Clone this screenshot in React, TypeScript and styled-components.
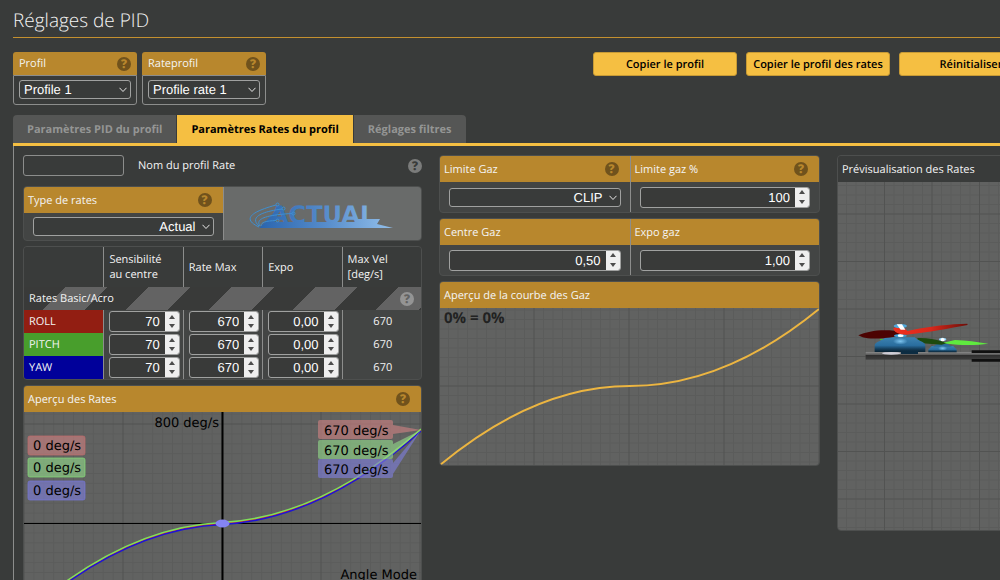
import React, { useId } from "react";
import styled, { createGlobalStyle, css } from "styled-components";

const gold = "#b8872d";
const yellow = "#f5bf42";
const line = "#8c8d8c";
const sans = '"Open Sans", "Noto Sans", sans-serif';
const control = '"Liberation Sans", Arial, sans-serif';

const GlobalStyle = createGlobalStyle`
  *, *::before, *::after { box-sizing: border-box; }
  body {
    margin: 0;
    background: #393b3a;
    color: #f4f4f4;
    font: 11px/15px ${sans};
    text-rendering: geometricPrecision;
  }
  button, input, select { margin: 0; padding: 0; color: inherit; font: inherit; text-rendering: inherit; }
`;

const Viewport = styled.div`
  height: 100vh;
  overflow: hidden;
`;

const Page = styled.main`
  min-width: 1056px;
  padding: 0 13px;
`;

const Title = styled.h1`
  margin: 0;
  padding: 6px 0 3px;
  border-bottom: 1px solid #c4902f;
  font-size: 19px;
  font-weight: 300;
  line-height: 28px;
`;

const TopBar = styled.div`
  display: flex;
  align-items: flex-start;
  justify-content: space-between;
  margin-top: 14px;
`;

const Cluster = styled.div<{ $gap: number }>`
  display: flex;
  gap: ${(p) => p.$gap}px;
`;

const ProfileBox = styled.div`
  width: 124px;
`;

const ProfileHeader = styled.div`
  display: flex;
  align-items: center;
  justify-content: space-between;
  height: 23px;
  padding: 0 6px;
  border-radius: 3px 3px 0 0;
  background: ${gold};
`;

const ProfileBody = styled.div`
  height: 30px;
  padding: 4px 5px;
  border: 1px solid ${line};
  border-radius: 0 0 3px 3px;
`;

const ActionButton = styled.button`
  width: 144px;
  height: 24px;
  border: 1px solid #c79a35;
  border-radius: 3px;
  background: ${yellow};
  color: #000;
  font-weight: 600;
  white-space: nowrap;
`;

const Tabs = styled.div`
  display: flex;
  gap: 1px;
  margin-top: 10px;
  border-bottom: 3px solid ${yellow};
`;

const Tab = styled.button<{ $active?: boolean }>`
  height: 28px;
  padding: 0 14px;
  border: 0;
  background: ${(p) => (p.$active ? yellow : "#555655")};
  color: ${(p) => (p.$active ? "#000" : "#949594")};
  font-weight: 700;
  &:first-child { border-top-left-radius: 4px; }
  &:last-child { border-top-right-radius: 4px; }
`;

const Panel = styled.section`
  display: grid;
  grid-template-columns: minmax(0, 399fr) minmax(0, 381fr) minmax(0, 206fr);
  align-items: start;
  gap: 17px;
  padding: 9px 0 20px 9px;
  border-left: 1px solid ${line};
`;

const Column = styled.div`
  display: flex;
  flex-direction: column;
  gap: 5px;
`;

const NameRow = styled.div`
  display: flex;
  align-items: center;
  height: 21px;
  margin-bottom: 5px;
`;

const NameInput = styled.input`
  width: 101px;
  height: 21px;
  padding: 0 4px;
  border: 1px solid ${line};
  border-radius: 3px;
  background: transparent;
  font-family: ${control};
`;

const NameLabel = styled.label`
  flex: 1;
  margin-left: 14px;
`;

const Card = styled.div`
  overflow: hidden;
  border: 1px solid #4d4f4e;
  border-radius: 4px;
  background: #434544;
`;

const Split = styled.div`
  display: grid;
  grid-template-columns: repeat(2, minmax(0, 1fr));
  > * + * { border-left: 1px solid ${line}; }
`;

const CardHeader = styled.div<{ $plain?: boolean }>`
  display: flex;
  align-items: center;
  justify-content: space-between;
  height: 26px;
  padding: 0 11px 0 4px;
  background: ${(p) => (p.$plain ? "#393b3a" : gold)};
  white-space: nowrap;
`;

const CardBody = styled.div<{ $tall?: boolean }>`
  display: flex;
  align-items: center;
  height: ${(p) => (p.$tall ? 30 : 27)}px;
  padding: 0 9px;
`;

const LogoPane = styled.div`
  display: flex;
  align-items: center;
  justify-content: center;
  background: #696b6a;
`;

const helpTones = {
  gold: css`background: #70521c; color: ${gold};`,
  dark: css`background: #7b7c7b; color: #393b3a;`,
  band: css`background: #949494; color: #626262;`,
};

const HelpBadge = styled.span<{ $tone: keyof typeof helpTones }>`
  display: inline-flex;
  align-items: center;
  justify-content: center;
  flex: none;
  width: 14px;
  height: 14px;
  border-radius: 50%;
  font-size: 12px;
  font-weight: 800;
  line-height: 14px;
  ${(p) => helpTones[p.$tone]}
`;

const SelectWrap = styled.div`
  position: relative;
  width: 100%;
  height: 19px;
`;

const SelectBox = styled.select<{ $right?: boolean }>`
  display: block;
  width: 100%;
  height: 19px;
  padding: 0 17px 0 4px;
  appearance: none;
  border: 1px solid #a0a1a0;
  border-radius: 3px;
  background: #393b3a;
  color: #fff;
  font: 13px/17px ${control};
  text-align-last: ${(p) => (p.$right ? "right" : "left")};
`;

const Chevron = styled.svg`
  position: absolute;
  top: 7px;
  right: 4px;
  pointer-events: none;
`;

const NumberWrap = styled.div`
  display: flex;
  width: 100%;
  height: 21px;
  overflow: hidden;
  border: 1px solid #a0a1a0;
  border-radius: 3px;
  background: #393a39;
`;

const NumberInput = styled.input`
  flex: 1;
  min-width: 0;
  padding-right: 5px;
  border: 0;
  background: transparent;
  color: #fff;
  font: 13px/19px ${control};
  text-align: right;
`;

const Stepper = styled.span`
  display: flex;
  flex-direction: column;
  width: 14px;
  background: #efefef;
`;

const StepButton = styled.button`
  display: flex;
  flex: 1;
  align-items: center;
  justify-content: center;
  border: 0;
  background: transparent;
  color: #4c4c4c;
`;

const RateTable = styled.table`
  width: 100%;
  table-layout: fixed;
  border-collapse: separate;
  border-spacing: 0;
  th, td { padding: 0 3px 0 5px; text-align: left; font-weight: 400; }
  thead th { height: 40px; background: #393b3a; }
  thead th + th, tbody td { border-left: 1px solid ${line}; }
`;

const Band = styled.th`
  && {
    height: 23px;
    padding-right: 7px;
    background: repeating-linear-gradient(135deg, #393a39 0 29px, #636363 29px 59px);
  }
`;

const BandContent = styled.div`
  display: flex;
  align-items: center;
  justify-content: space-between;
`;

const AxisName = styled.th<{ $color: string }>`
  height: 23px;
  background: ${(p) => p.$color};
`;

const MaxVelocity = styled.td`
  && { text-align: center; }
`;

const Chart = styled.svg`
  display: block;
  width: 100%;
  background: #616261;
`;

const Preview = styled(Chart)`
  height: 348px;
`;

function Help({ tone = "gold" }: { tone?: keyof typeof helpTones }) {
  return <HelpBadge $tone={tone} title="Aide">?</HelpBadge>;
}

function Select({ label, value, right }: { label: string; value: string; right?: boolean }) {
  return (
    <SelectWrap>
      <SelectBox aria-label={label} $right={right} defaultValue={value}>
        <option>{value}</option>
      </SelectBox>
      <Chevron width="8" height="6" viewBox="0 0 8 6" fill="none" stroke="#e8e8e8">
        <path d="M0.5 0.8 4 4.5 7.5 0.8" />
      </Chevron>
    </SelectWrap>
  );
}

function NumberField({ label, value }: { label: string; value: string }) {
  return (
    <NumberWrap>
      <NumberInput aria-label={label} inputMode="decimal" defaultValue={value} />
      <Stepper>
        <StepButton aria-label={`${label} +`}>
          <svg width="6" height="4" viewBox="0 0 6 4"><path d="M0 4 3 0 6 4Z" fill="currentColor" /></svg>
        </StepButton>
        <StepButton aria-label={`${label} -`}>
          <svg width="6" height="4" viewBox="0 0 6 4"><path d="M0 0 3 4 6 0Z" fill="currentColor" /></svg>
        </StepButton>
      </Stepper>
    </NumberWrap>
  );
}

/* Fine cells inside major cells, with the major lines crossing at (x, y). */
function GridLines({ x, y, major }: { x: number; y: number; major: number }) {
  const id = useId();
  const minor = major / 10 >= 9 ? major / 10 : major / 5;
  return (
    <>
      <defs>
        <pattern id={`${id}a`} x={x - 0.5} y={y - 0.5} width={minor} height={minor} patternUnits="userSpaceOnUse">
          <path d={`M0.5 0V${minor}M0 0.5H${minor}`} stroke="#000" strokeOpacity="0.06" />
        </pattern>
        <pattern id={`${id}b`} x={x - 0.5} y={y - 0.5} width={major} height={major} patternUnits="userSpaceOnUse">
          <path d={`M0.5 0V${major}M0 0.5H${major}`} stroke="#000" strokeOpacity="0.1" />
        </pattern>
      </defs>
      <rect width="100%" height="100%" fill={`url(#${id}a)`} />
      <rect width="100%" height="100%" fill={`url(#${id}b)`} />
    </>
  );
}

function ActualLogo() {
  return (
    <svg width="146" height="32" viewBox="0 0 146 32" role="img" aria-label="Actual">
      <defs>
        <linearGradient id="logoFill" gradientUnits="userSpaceOnUse" x1="10" y1="0" x2="140" y2="0">
          <stop offset="0" stopColor="#2a65ae" />
          <stop offset="0.5" stopColor="#558bca" />
          <stop offset="1" stopColor="#8fbce8" />
        </linearGradient>
      </defs>
      <text x="21" y="25" fontFamily='"DejaVu Sans", sans-serif' fontWeight="700" fontSize="24" fill="url(#logoFill)">
        ACTUAL
      </text>
      <path d="M10 30 17 23 30 9 34 9 23 24H106V21H131L128 26 144 30Z" fill="url(#logoFill)" />
      <g fill="none" stroke="#3f8fd0" strokeWidth="1">
        <path d="M10 29C-5 22-2 15 27 7" />
        <path d="M10 28C1 20 10 14 33 11" />
        <path d="M11 28C6 21 16 17 43 15.500" />
        <path d="M12 28C12 24 17 23 27 22.500" />
        <circle cx="28.500" cy="6.500" r="1.500" />
        <circle cx="34.500" cy="10.500" r="1.500" />
        <circle cx="44.500" cy="15.500" r="1.500" />
        <circle cx="28.500" cy="22.500" r="1.500" />
      </g>
    </svg>
  );
}

const balloons = [
  { fill: "#c87f7f", stroke: "#c06a6a", left: 24, right: 8, tail: "M369 13 397 18 369 22Z" },
  { fill: "#8fd287", stroke: "#83dd76", left: 46, right: 28, tail: "M369 32 397 18 369 42Z" },
  { fill: "#7c7cd6", stroke: "#7575d8", left: 69, right: 47, tail: "M369 51 397 18 369 62Z" },
];

const curves = [
  { color: "#e02020", dy: 0 },
  { color: "#1c14d8", dy: 1 },
  { color: "#7fe05a", dy: -1 },
];

function RatesChart() {
  return (
    <Chart viewBox="0 0 397 223" fontFamily='"DejaVu Sans", Verdana, sans-serif' fontSize="13" role="img" aria-label="Aperçu des Rates">
      <GridLines x={198} y={111} major={99} />
      <path d="M0 111.500H397" stroke="#000" />
      <path d="M198.500 0V223" stroke="#000" strokeWidth="2" />
      {curves.map((c) => (
        <path
          key={c.color}
          d="M0 204Q99 116 198 111.500Q298 106 397 18"
          transform={`translate(0 ${c.dy})`}
          fill="none"
          stroke={c.color}
          strokeWidth="1.500"
        />
      ))}
      <ellipse cx="198.500" cy="111.500" rx="7" ry="4" fill="#8484f5" />
      {balloons.map((b) => (
        <g key={b.fill}>
          <g fill={b.fill} fillOpacity="0.65">
            <rect x="4" y={b.left} width="57" height="19" rx="2" stroke={b.stroke} strokeOpacity="0.7" />
            <rect x="294" y={b.right} width="75" height="19" rx="2" />
            <path d={b.tail} />
          </g>
          <text x="9" y={b.left + 14}>0 deg/s</text>
          <text x="300" y={b.right + 15}>670 deg/s</text>
        </g>
      ))}
      <text x="195" y="15" textAnchor="end">800 deg/s</text>
      <text x="393" y="167" textAnchor="end">Angle Mode</text>
    </Chart>
  );
}

function ThrottleChart() {
  return (
    <Chart viewBox="0 0 379 157" role="img" aria-label="Aperçu de la courbe des Gaz">
      <GridLines x={189} y={78} major={95} />
      <path d="M0 157Q95 78 190 78Q285 78 379 1" fill="none" stroke="#ecb541" strokeWidth="2" />
      <text x="4" y="15" fontFamily={sans} fontSize="15" fontWeight="700" fill="#222">0% = 0%</text>
    </Chart>
  );
}

function QuadPreview() {
  return (
    <Preview role="img" aria-label="Prévisualisation des Rates">
      <defs>
        <linearGradient id="motor" x1="0" y1="0" x2="0" y2="1">
          <stop offset="0" stopColor="#3d82b0" />
          <stop offset="0.55" stopColor="#2a6e9f" />
          <stop offset="0.8" stopColor="#143c58" />
          <stop offset="1" stopColor="#0b2333" />
        </linearGradient>
        <radialGradient id="glint">
          <stop offset="0" stopColor="#7cc3ee" />
          <stop offset="1" stopColor="#7cc3ee" stopOpacity="0" />
        </radialGradient>
        <linearGradient id="arm" x1="0" y1="0" x2="0" y2="1">
          <stop offset="0" stopColor="#8a8a8a" />
          <stop offset="0.35" stopColor="#5b5b5b" />
          <stop offset="0.45" stopColor="#2f2f2f" />
          <stop offset="1" stopColor="#3f3f3f" />
        </linearGradient>
        <linearGradient id="redBlade" x1="0" y1="0" x2="1" y2="0">
          <stop offset="0" stopColor="#f0301f" />
          <stop offset="0.5" stopColor="#d9281b" />
          <stop offset="1" stopColor="#6d0f0a" />
        </linearGradient>
      </defs>
      <GridLines x={94} y={32} major={47.5} />
      <g transform="scale(0.3333) translate(-24 -123)">
        <rect x="107" y="633" width="600" height="23" fill="url(#arm)" />
        <path d="M425 628H707V636H425ZM425 654H707V662H425Z" fill="#101010" />
        <ellipse cx="184" cy="637" rx="28" ry="4" fill="#cfcdd6" />
        <path d="M305 615H370L380 626V634H295V626Z" fill="url(#motor)" />
        <path d="M322 608H352L366 617H309Z" fill="#2b6c9c" />
        <ellipse cx="338" cy="622" rx="14" ry="7" fill="url(#glint)" />
        <path d="M262 591C290 590 315 594 335 601L352 606 335 611C310 610 280 608 264 604Z" fill="#1d4a0f" />
        <path d="M340 605 375 597C410 598 440 603 475 608 440 613 390 613 352 608Z" fill="#5fea3f" />
        <ellipse cx="338" cy="595" rx="11" ry="5" fill="#8fd0f5" />
        <ellipse cx="338" cy="596" rx="6" ry="5" fill="#fff" />
        <path d="M148 594H160V598H152Z" fill="#42c529" />
        <path d="M166 589H255C258 598 285 602 286 612V633H134V612C136 602 162 598 166 589Z" fill="url(#motor)" />
        <path d="M213 630H264V639H213Z" fill="#0c2c42" />
        <ellipse cx="211" cy="601" rx="22" ry="10" fill="url(#glint)" />
        <path d="M85 583C110 572 145 565 192 569L214 580 194 587C165 592 120 596 98 589Z" fill="#4c0302" />
        <ellipse cx="211" cy="584" rx="19" ry="5" fill="#3aa0da" />
        <ellipse cx="212" cy="584" rx="9" ry="4" fill="#fff" />
        <path d="M190 562C200 556 224 556 232 570L250 566C300 556 360 549 412 548L413 552C360 562 290 574 240 580 220 584 192 578 190 562Z" fill="url(#redBlade)" />
        <ellipse cx="211" cy="555" rx="20" ry="6" fill="#4fa9dc" />
        <path d="M200 550H216L226 566 212 566Z" fill="#fff" />
      </g>
    </Preview>
  );
}

const axes = [
  { name: "ROLL", color: "#921e12" },
  { name: "PITCH", color: "#489e2c" },
  { name: "YAW", color: "#00009a" },
];

function RatesTable() {
  return (
    <Card>
      <RateTable>
        <thead>
          <tr>
            <th aria-label="Axe" />
            <th>Sensibilité<br />au centre</th>
            <th>Rate Max</th>
            <th>Expo</th>
            <th>Max Vel<br />[deg/s]</th>
          </tr>
        </thead>
        <tbody>
          <tr>
            <Band colSpan={5}>
              <BandContent>Rates Basic/Acro<Help tone="band" /></BandContent>
            </Band>
          </tr>
          {axes.map((axis) => (
            <tr key={axis.name}>
              <AxisName scope="row" $color={axis.color}>{axis.name}</AxisName>
              <td><NumberField label={`${axis.name} sensibilité`} value="70" /></td>
              <td><NumberField label={`${axis.name} rate max`} value="670" /></td>
              <td><NumberField label={`${axis.name} expo`} value="0,00" /></td>
              <MaxVelocity>670</MaxVelocity>
            </tr>
          ))}
        </tbody>
      </RateTable>
    </Card>
  );
}

export default function App() {
  return (
    <Viewport>
      <GlobalStyle />
      <Page>
        <Title>Réglages de PID</Title>
        <TopBar>
          <Cluster $gap={5}>
            <ProfileBox>
              <ProfileHeader>Profil<Help /></ProfileHeader>
              <ProfileBody><Select label="Profil" value="Profile 1" /></ProfileBody>
            </ProfileBox>
            <ProfileBox>
              <ProfileHeader>Rateprofil<Help /></ProfileHeader>
              <ProfileBody><Select label="Rateprofil" value="Profile rate 1" /></ProfileBody>
            </ProfileBox>
          </Cluster>
          <Cluster $gap={9}>
            <ActionButton>Copier le profil</ActionButton>
            <ActionButton>Copier le profil des rates</ActionButton>
            <ActionButton>Réinitialiser</ActionButton>
          </Cluster>
        </TopBar>
        <Tabs role="tablist">
          <Tab role="tab">Paramètres PID du profil</Tab>
          <Tab role="tab" aria-selected $active>Paramètres Rates du profil</Tab>
          <Tab role="tab">Réglages filtres</Tab>
        </Tabs>
        <Panel>
          <Column>
            <NameRow>
              <NameInput id="rate-name" />
              <NameLabel htmlFor="rate-name">Nom du profil Rate</NameLabel>
              <Help tone="dark" />
            </NameRow>
            <Card>
              <Split>
                <div>
                  <CardHeader>Type de rates<Help /></CardHeader>
                  <CardBody><Select label="Type de rates" value="Actual" right /></CardBody>
                </div>
                <LogoPane><ActualLogo /></LogoPane>
              </Split>
            </Card>
            <RatesTable />
            <Card>
              <CardHeader>Aperçu des Rates<Help /></CardHeader>
              <RatesChart />
            </Card>
          </Column>
          <Column>
            <Card>
              <Split>
                <div>
                  <CardHeader>Limite Gaz<Help /></CardHeader>
                  <CardBody $tall><Select label="Limite Gaz" value="CLIP" right /></CardBody>
                </div>
                <div>
                  <CardHeader>Limite gaz %<Help /></CardHeader>
                  <CardBody $tall><NumberField label="Limite gaz %" value="100" /></CardBody>
                </div>
              </Split>
            </Card>
            <Card>
              <Split>
                <div>
                  <CardHeader>Centre Gaz</CardHeader>
                  <CardBody $tall><NumberField label="Centre Gaz" value="0,50" /></CardBody>
                </div>
                <div>
                  <CardHeader>Expo gaz</CardHeader>
                  <CardBody $tall><NumberField label="Expo gaz" value="1,00" /></CardBody>
                </div>
              </Split>
            </Card>
            <Card>
              <CardHeader>Aperçu de la courbe des Gaz</CardHeader>
              <ThrottleChart />
            </Card>
          </Column>
          <Card>
            <CardHeader $plain>Prévisualisation des Rates</CardHeader>
            <QuadPreview />
          </Card>
        </Panel>
      </Page>
    </Viewport>
  );
}
